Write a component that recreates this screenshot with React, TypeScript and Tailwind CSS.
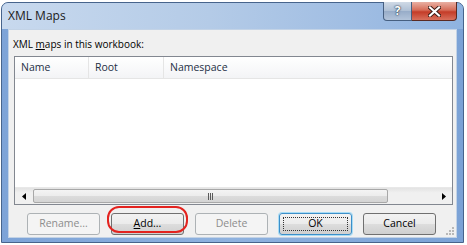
import React from "react";

const BUTTONS = [
  { label: "Rename...", disabled: true },
  { label: "Add...", mnemonic: "A", circled: true },
  { label: "Delete", disabled: true },
  { label: "OK", isDefault: true },
  { label: "Cancel" },
];

function DialogButton({
  label,
  disabled,
  mnemonic,
  circled,
  isDefault,
}: {
  label: string;
  disabled?: boolean;
  mnemonic?: string;
  circled?: boolean;
  isDefault?: boolean;
}) {
  const text =
    mnemonic && label.startsWith(mnemonic) ? (
      <>
        <span className="underline underline-offset-[1px]">{mnemonic}</span>
        {label.slice(mnemonic.length)}
      </>
    ) : (
      label
    );

  return (
    <div className="relative w-[73px] h-[22px]">
      <button
        disabled={disabled}
        className={
          disabled
            ? "w-full h-full rounded-[3px] border border-[#adb2b5] bg-[#f4f4f4] text-[#8d8d8d] text-[10.5px]"
            : isDefault
            ? "relative w-full h-full rounded-[3px] border border-[#3c8fc9] shadow-[0_0_0_1px_#a8dcf5] bg-[linear-gradient(to_bottom,#f2f2f2_0%,#ebebeb_50%,#dddddd_51%,#cfcfcf_100%)] text-black text-[10.5px]"
            : "w-full h-full rounded-[3px] border border-[#707070] bg-[linear-gradient(to_bottom,#f2f2f2_0%,#ebebeb_50%,#dddddd_51%,#cfcfcf_100%)] text-black text-[10.5px]"
        }
      >
        {isDefault && (
          <span className="absolute inset-[3px] border border-dotted border-[#333]" />
        )}
        <span className="relative">{text}</span>
      </button>
      {circled && (
        <div className="absolute -left-[4px] -right-[4px] -top-[3px] -bottom-[2px] rounded-[12px] border-2 border-[#e3231f]" />
      )}
    </div>
  );
}

export default function App() {
  return (
    <div
      className="w-[467px] h-[245px] bg-white overflow-hidden"
      style={{ fontFamily: '"Open Sans", "Liberation Sans", sans-serif' }}
    >
      {/* window frame */}
      <div className="ml-[1px] mt-[2px] w-[463px] h-[241px] flex flex-col rounded-t-[7px] border border-[#47648c] bg-[linear-gradient(to_right,#7da3d7,#8fb2df_50%,#7ba2d6)] px-[6px] pb-[4px]">
        {/* title bar */}
        <div className="-mx-[6px] px-[6px] h-[26px] flex justify-between rounded-t-[6px] bg-[linear-gradient(to_right,#c8d9ee,#b4cbe7_45%,#a1bee3_75%,#8fb3e0)]">
          <span className="pt-[5px] text-[12px] text-[#1b1b1b] leading-[16px]">XML Maps</span>
          <div className="flex -mt-[1px]">
            <div className="w-[29px] h-[19px] rounded-bl-[4px] border border-t-0 border-[#465f80] bg-[linear-gradient(to_bottom,#d0dae6,#aebfd4_50%,#97acc8_51%,#b3c4da)] flex items-center justify-center text-white font-bold text-[12px] leading-none [text-shadow:0_0_2px_#1c2b40,0_0_1px_#1c2b40]">
              ?
            </div>
            <div className="w-[45px] h-[19px] rounded-br-[4px] border border-t-0 border-l-0 border-[#5a2a22] bg-[linear-gradient(to_bottom,#e9b0a3,#d66c58_45%,#c43c28_55%,#d8705c)] flex items-center justify-center">
              <svg width="13" height="11" viewBox="0 0 13 11">
                <path d="M2 1.5 L11 9.5 M11 1.5 L2 9.5" stroke="#3a1a14" strokeWidth="4" strokeLinecap="square" />
                <path d="M2 1.5 L11 9.5 M11 1.5 L2 9.5" stroke="#ffffff" strokeWidth="2.2" strokeLinecap="square" />
              </svg>
            </div>
          </div>
        </div>

        {/* client area */}
        <div className="relative flex-1 flex flex-col border border-[#c3d3e6] bg-[#f0f0f0]">
          <div className="h-[26px] pl-[4px] pt-[7px] text-[10px] leading-[14px] text-black">
            XML <span className="underline underline-offset-[1px]">m</span>aps in this workbook:
          </div>

          {/* list view */}
          <div className="ml-[5px] w-[439px] h-[149px] flex flex-col border border-[#828790] bg-white">
            <div className="h-[22px] flex border-b border-[#e5e5e5] bg-[linear-gradient(to_bottom,#ffffff,#f3f4f6)] text-[10.5px] text-[#1e2f45]">
              <div className="w-[74px] pl-[6px] flex items-center border-r border-[#e5e5e5]">Name</div>
              <div className="w-[75px] pl-[6px] flex items-center border-r border-[#e5e5e5]">Root</div>
              <div className="flex-1 pl-[6px] flex items-center">Namespace</div>
            </div>
            <div className="flex-1" />
            {/* horizontal scrollbar */}
            <div className="h-[17px] flex items-stretch bg-[linear-gradient(to_bottom,#e3e3e3,#f0f0f0_30%,#f0f0f0)] border-t border-[#e8e8e8]">
              <div className="w-[17px] flex items-center justify-center">
                <svg width="4" height="7" viewBox="0 0 4 7">
                  <path d="M4 0 L0 3.5 L4 7 Z" fill="#000" />
                </svg>
              </div>
              <div className="ml-[1px] w-[355px] my-[1px] rounded-[2px] border border-[#a8a8a8] bg-[linear-gradient(to_bottom,#f4f4f4,#ececec_50%,#dcdcdc_51%,#d4d4d4)] flex items-center justify-center gap-[1px]">
                <span className="w-[1px] h-[7px] bg-[#5a5a5a]" />
                <span className="w-[1px] h-[7px] bg-[#5a5a5a]" />
                <span className="w-[1px] h-[7px] bg-[#5a5a5a]" />
              </div>
              <div className="flex-1" />
              <div className="w-[17px] flex items-center justify-center">
                <svg width="4" height="7" viewBox="0 0 4 7">
                  <path d="M0 0 L4 3.5 L0 7 Z" fill="#000" />
                </svg>
              </div>
            </div>
          </div>

          {/* buttons */}
          <div className="mt-[4px] ml-[18px] flex gap-[11px]">
            {BUTTONS.map((b) => (
              <DialogButton key={b.label} {...b} />
            ))}
          </div>

          {/* size grip */}
          <svg className="absolute right-[1px] bottom-[1px]" width="10" height="10" viewBox="0 0 10 10">
            <rect x="7" y="1" width="2" height="2" fill="#b8b8b8" />
            <rect x="4" y="4" width="2" height="2" fill="#b8b8b8" />
            <rect x="7" y="4" width="2" height="2" fill="#b8b8b8" />
            <rect x="1" y="7" width="2" height="2" fill="#b8b8b8" />
            <rect x="4" y="7" width="2" height="2" fill="#b8b8b8" />
            <rect x="7" y="7" width="2" height="2" fill="#b8b8b8" />
          </svg>
        </div>
      </div>
    </div>
  );
}
